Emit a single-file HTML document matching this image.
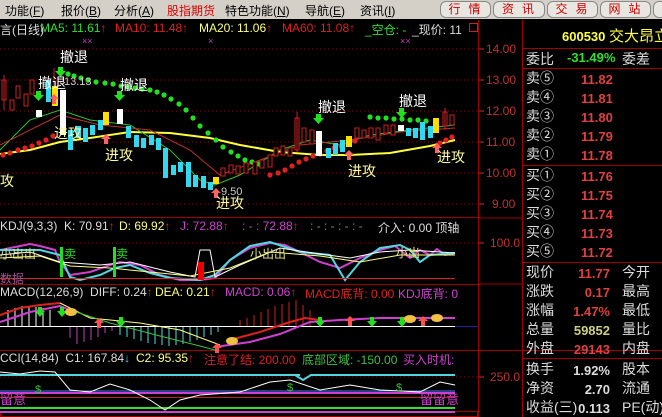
<!DOCTYPE html>
<html><head><meta charset="utf-8"><style>
*{margin:0;padding:0;box-sizing:border-box}
body{width:662px;height:417px;overflow:hidden;background:#000;font-family:"Liberation Sans","Noto Sans CJK SC",sans-serif;position:relative}
#menu{position:absolute;left:0;top:0;width:662px;height:19px;background:#d4d0c8;font-size:12px;color:#000}
#menu span{position:absolute;top:2px;white-space:nowrap}
.btn{position:absolute;top:1px;height:17px;border:1px solid #888;border-radius:6px;background:#e8e6e0;color:#c00;font-size:12px;text-align:center;line-height:15px;letter-spacing:8px;padding-left:6px}
.t{position:absolute;font-size:12px;white-space:nowrap}
</style></head><body>
<div id="menu">
<span style="left:5px">功能(<u>F</u>)</span>
<span style="left:61px">报价(<u>B</u>)</span>
<span style="left:114px">分析(<u>A</u>)</span>
<span style="left:167px;color:#d00">股指期货</span>
<span style="left:225px">特色功能(<u>N</u>)</span>
<span style="left:305px">导航(<u>E</u>)</span>
<span style="left:360px">资讯(<u>I</u>)</span>
<div class="btn" style="left:440px;width:51px">行情</div>
<div class="btn" style="left:493px;width:52px">资讯</div>
<div class="btn" style="left:547px;width:51px">交易</div>
<div class="btn" style="left:600px;width:51px">网站</div>
<div class="btn" style="left:653px;width:20px"></div>
</div>
<svg style="position:absolute;left:0;top:0" width="662" height="417">
<g stroke="#a00000" stroke-width="1" fill="none">
<line x1="0" y1="217.5" x2="478" y2="217.5"/>
<line x1="0" y1="284.5" x2="478" y2="284.5"/>
<line x1="0" y1="350.5" x2="662" y2="350.5"/>
<line x1="478.5" y1="20" x2="478.5" y2="417"/>
<line x1="522.5" y1="20" x2="522.5" y2="417"/>
<line x1="478" y1="218" x2="522" y2="218"/>
<line x1="478" y1="284" x2="522" y2="284"/>
<line x1="523" y1="48.5" x2="662" y2="48.5"/>
<line x1="523" y1="68.5" x2="662" y2="68.5"/>
<line x1="523" y1="165.5" x2="662" y2="165.5"/>
<line x1="523" y1="262.5" x2="662" y2="262.5"/>
<line x1="523" y1="358.5" x2="662" y2="358.5"/>
<rect x="0.5" y="411.5" width="477" height="5"/>
</g>
<g stroke="#801010" stroke-dasharray="1,3">
<line x1="0" y1="49" x2="478" y2="49"/><line x1="0" y1="80" x2="478" y2="80"/><line x1="0" y1="111" x2="478" y2="111"/><line x1="0" y1="142" x2="478" y2="142"/><line x1="0" y1="173" x2="478" y2="173"/><line x1="0" y1="204" x2="478" y2="204"/>
<line x1="0" y1="243" x2="478" y2="243"/><line x1="0" y1="377" x2="478" y2="377"/>
</g>
<g stroke="#c03030"><line x1="479" y1="49" x2="484" y2="49"/><line x1="479" y1="80" x2="484" y2="80"/><line x1="479" y1="111" x2="484" y2="111"/><line x1="479" y1="142" x2="484" y2="142"/><line x1="479" y1="173" x2="484" y2="173"/><line x1="479" y1="204" x2="484" y2="204"/><line x1="479" y1="243" x2="484" y2="243"/><line x1="479" y1="377" x2="484" y2="377"/></g>
<g fill="#c03030" font-size="12" font-family="Liberation Sans">
<text x="486" y="53">14.00</text><text x="486" y="84">13.00</text><text x="486" y="115">12.00</text><text x="486" y="146">11.00</text><text x="486" y="177">10.00</text><text x="492" y="208">9.00</text><text x="490" y="247">100.0</text><text x="490" y="381">250.0</text>
</g>
<polyline fill="none" stroke="#ffff40" stroke-width="2" points="0,154 30,150 60,142 90,138 130,132 170,133 210,138 240,145 280,152 320,155 350,155 390,153 430,146 455,140"/>
<polyline fill="none" stroke="#30c030" stroke-width="1" points="0,150 30,120 60,110 90,120 130,125 170,150 200,180 215,185 240,175 280,150 310,140 340,145 370,135 410,130 455,125"/>
<polyline fill="none" stroke="#c03030" stroke-width="1" points="0,145 40,125 60,115 100,125 150,130 190,150 220,175 260,160 300,145 350,140 400,132 455,128"/>
<g fill="#20e020">
<circle cx="68" cy="74" r="2.6"/>
<circle cx="74" cy="76" r="2.6"/><circle cx="81" cy="78" r="2.6"/><circle cx="88" cy="80" r="2.6"/><circle cx="96" cy="82" r="2.6"/><circle cx="105" cy="83" r="2.6"/><circle cx="113" cy="84" r="2.6"/><circle cx="121" cy="86" r="2.6"/><circle cx="128" cy="87" r="2.6"/><circle cx="135" cy="88" r="2.6"/><circle cx="142" cy="89" r="2.6"/><circle cx="150" cy="90" r="2.6"/><circle cx="157" cy="92" r="2.6"/><circle cx="164" cy="95" r="2.6"/><circle cx="171" cy="99" r="2.6"/><circle cx="179" cy="104" r="2.6"/><circle cx="186" cy="110" r="2.6"/><circle cx="193" cy="118" r="2.6"/><circle cx="200" cy="126" r="2.6"/><circle cx="208" cy="133" r="2.6"/><circle cx="216" cy="140" r="2.6"/><circle cx="223" cy="147" r="2.6"/><circle cx="231" cy="152" r="2.6"/><circle cx="238" cy="156" r="2.6"/><circle cx="245" cy="160" r="2.6"/><circle cx="252" cy="162" r="2.6"/><circle cx="259" cy="164" r="2.6"/>
<circle cx="370" cy="117" r="2.6"/><circle cx="378" cy="118" r="2.6"/><circle cx="386" cy="118" r="2.6"/><circle cx="394" cy="119" r="2.6"/><circle cx="402" cy="119" r="2.6"/><circle cx="410" cy="120" r="2.6"/><circle cx="418" cy="120" r="2.6"/><circle cx="426" cy="121" r="2.6"/>
</g>
<g fill="#e02020">
<circle cx="3" cy="155" r="2.6"/><circle cx="10" cy="153" r="2.6"/><circle cx="18" cy="150" r="2.6"/><circle cx="25" cy="148" r="2.6"/><circle cx="32" cy="146" r="2.6"/><circle cx="39" cy="143" r="2.6"/><circle cx="46" cy="140" r="2.6"/><circle cx="53" cy="136" r="2.6"/>
<circle cx="270" cy="175" r="2.6"/><circle cx="278" cy="173" r="2.6"/><circle cx="285" cy="170" r="2.6"/><circle cx="292" cy="166" r="2.6"/><circle cx="299" cy="162" r="2.6"/><circle cx="306" cy="159" r="2.6"/><circle cx="313" cy="156" r="2.6"/><circle cx="320" cy="154" r="2.6"/><circle cx="327" cy="151" r="2.6"/><circle cx="334" cy="148" r="2.6"/><circle cx="341" cy="146" r="2.6"/><circle cx="348" cy="143" r="2.6"/><circle cx="355" cy="141" r="2.6"/>
<circle cx="440" cy="143" r="2.6"/><circle cx="446" cy="140" r="2.6"/><circle cx="452" cy="137" r="2.6"/>
</g>
<g stroke-width="1">
<g fill="#000" stroke="#d02020">
<rect x="2" y="80" width="4" height="20"/><rect x="10" y="100" width="4" height="10"/><rect x="16" y="86" width="4" height="12"/><rect x="24" y="94" width="4" height="12"/><rect x="30" y="80" width="4" height="14"/>
<rect x="221" y="168" width="4" height="8"/><rect x="229" y="165" width="4" height="8"/><rect x="236" y="166" width="4" height="8"/><rect x="244" y="163" width="4" height="10"/><rect x="253" y="162" width="4" height="12"/><rect x="260" y="160" width="4" height="8"/><rect x="268" y="155" width="4" height="12"/>
<rect x="274" y="148" width="4" height="8"/><rect x="281" y="146" width="4" height="9"/><rect x="288" y="148" width="4" height="8"/><rect x="295" y="118" width="4" height="32"/><rect x="302" y="128" width="4" height="14"/><rect x="310" y="130" width="4" height="14"/>
<rect x="355" y="128" width="4" height="10"/><rect x="362" y="130" width="4" height="8"/><rect x="369" y="128" width="4" height="10"/><rect x="376" y="128" width="4" height="12"/><rect x="384" y="125" width="4" height="8"/><rect x="391" y="125" width="4" height="10"/>
<rect x="443" y="112" width="4" height="14"/><rect x="450" y="115" width="4" height="10"/>
</g>
<g stroke="#d02020"><line x1="4" y1="75" x2="4" y2="110"/><line x1="54" y1="68" x2="54" y2="100"/><line x1="297" y1="112" x2="297" y2="152"/><line x1="445" y1="108" x2="445" y2="130"/></g>
<g fill="#30d8f0">
<rect x="46" y="80" width="5" height="22"/><rect x="68" y="130" width="5" height="20"/><rect x="76" y="126" width="5" height="12"/><rect x="83" y="128" width="5" height="14"/><rect x="90" y="125" width="5" height="10"/><rect x="98" y="120" width="5" height="10"/>
<rect x="126" y="126" width="5" height="12"/><rect x="134" y="135" width="5" height="12"/><rect x="141" y="138" width="5" height="10"/><rect x="149" y="135" width="5" height="10"/><rect x="156" y="138" width="5" height="12"/>
<rect x="163" y="148" width="5" height="30"/><rect x="171" y="165" width="5" height="10"/><rect x="178" y="162" width="5" height="10"/><rect x="186" y="162" width="5" height="25"/><rect x="193" y="175" width="5" height="12"/><rect x="201" y="176" width="5" height="12"/><rect x="208" y="182" width="5" height="8"/>
<rect x="326" y="148" width="5" height="10"/><rect x="333" y="143" width="5" height="12"/><rect x="340" y="140" width="5" height="12"/>
<rect x="406" y="128" width="5" height="8"/><rect x="413" y="128" width="5" height="10"/><rect x="420" y="122" width="5" height="18"/><rect x="428" y="126" width="5" height="12"/>
</g>
<g fill="#ffffff"><rect x="36" y="110" width="6" height="7"/><rect x="60" y="90" width="6" height="45"/><rect x="117" y="109" width="6" height="15"/><rect x="316" y="131" width="6" height="25"/><rect x="398" y="125" width="6" height="6"/></g>
<g fill="#ffdd00"><rect x="52" y="86" width="6" height="20"/><rect x="103" y="112" width="6" height="13"/><rect x="213" y="177" width="6" height="7"/><rect x="346" y="136" width="6" height="11"/><rect x="433" y="118" width="6" height="15"/></g>
</g>
<g fill="#20e020"><path d="M58,67 h5 v4 h3 l-5.5,6 l-5.5,-6 h3z"/><path d="M36,91 h5 v4 h3 l-5.5,6 l-5.5,-6 h3z"/><path d="M117,91 h5 v4 h3 l-5.5,6 l-5.5,-6 h3z"/><path d="M316,114 h5 v4 h3 l-5.5,6 l-5.5,-6 h3z"/><path d="M399,108 h5 v4 h3 l-5.5,6 l-5.5,-6 h3z"/></g>
<g fill="#ff6060"><path d="M54,94 l5,5 h-3 v5 h-4 v-5 h-3z"/><path d="M106,134 l5,5 h-3 v5 h-4 v-5 h-3z"/><path d="M216,188 l5,5 h-3 v5 h-4 v-5 h-3z"/><path d="M349,150 l5,5 h-3 v5 h-4 v-5 h-3z"/><path d="M437,143 l5,5 h-3 v5 h-4 v-5 h-3z"/></g>
<g fill="#fff" font-size="14" font-family="Liberation Sans,Noto Sans CJK SC,sans-serif">
<text x="60" y="62">撤退</text><text x="38" y="88">撤退</text><text x="120" y="90">撤退</text><text x="318" y="112">撤退</text><text x="399" y="106">撤退</text>
</g>
<g fill="#ffffa0" font-size="14" font-family="Liberation Sans,Noto Sans CJK SC,sans-serif">
<text x="54" y="138">进攻</text><text x="105" y="160">进攻</text><text x="0" y="186">攻</text><text x="216" y="208">进攻</text><text x="348" y="176">进攻</text><text x="437" y="162">进攻</text>
</g>
<text x="64" y="85" fill="#ccc" font-size="11">13.13</text><text x="221" y="195" fill="#ccc" font-size="11">9.50</text>
<g fill="#c040c0" font-size="9"><text x="82" y="44">××</text><text x="208" y="44">×</text><text x="400" y="44">××</text></g>
<polyline fill="none" stroke="#d040d0" stroke-width="2" points="0,250 20,246 30,244 40,246 55,250 60,262 70,275 90,272 110,265 120,262 140,265 160,275 180,280 200,280 215,278 230,260 250,248 270,243 285,245 300,252 320,262 340,268 360,258 380,250 395,246 410,258 420,250 430,255 437,249 445,255 455,253"/>
<polyline fill="none" stroke="#50d8e0" stroke-width="2" points="0,250 20,250 40,250 60,255 70,277 80,280 100,275 115,268 130,265 150,273 170,278 200,280 215,275 230,260 250,246 270,242 300,252 330,255 345,280 360,262 380,248 400,245 410,250 420,262 430,255 455,253"/>
<polyline fill="none" stroke="#ffffff" stroke-width="1" points="0,255 30,252 60,262 100,265 130,262 170,272 195,277 200,250 210,250 215,277 240,265 280,248 320,254 350,258 380,252 410,250 455,253"/>
<polyline fill="none" stroke="#ffff80" stroke-width="1" points="0,258 40,256 70,266 110,268 150,272 190,276 230,268 270,252 320,256 360,262 400,255 455,255"/>
<line x1="0" y1="278.5" x2="455" y2="278.5" stroke="#e02020"/>
<g fill="#20e020"><rect x="60" y="247" width="3" height="30"/><rect x="113" y="247" width="3" height="30"/></g>
<rect x="198" y="262" width="6" height="18" fill="#e00"/>
<g fill="#e0e080" font-size="12" font-family="Noto Sans CJK SC,sans-serif"><text x="64" y="258" fill="#20e020">卖</text><text x="116" y="258" fill="#20e020">卖</text><text x="0" y="258">小出出</text><text x="250" y="258">小出出</text><text x="396" y="257">小出</text><text x="0" y="283" fill="#a05090">数据</text></g>
<line x1="0" y1="326.5" x2="455" y2="326.5" stroke="#fff"/>
<line x1="455" y1="326.5" x2="478" y2="326.5" stroke="#2020a0"/>
<g stroke="#ffffff"><line x1="8" y1="326" x2="8" y2="310"/><line x1="15" y1="326" x2="15" y2="308"/><line x1="22" y1="326" x2="22" y2="306"/><line x1="29" y1="326" x2="29" y2="306"/><line x1="36" y1="326" x2="36" y2="307"/><line x1="43" y1="326" x2="43" y2="308"/><line x1="50" y1="326" x2="50" y2="310"/></g>
<g stroke="#c040c0"><line x1="70" y1="327" x2="70" y2="338"/><line x1="77" y1="327" x2="77" y2="344"/><line x1="84" y1="327" x2="84" y2="342"/><line x1="91" y1="327" x2="91" y2="340"/><line x1="98" y1="327" x2="98" y2="337"/><line x1="105" y1="327" x2="105" y2="333"/><line x1="112" y1="327" x2="112" y2="331"/></g>
<g stroke="#50e0e0"><line x1="120" y1="327" x2="120" y2="335"/><line x1="127" y1="327" x2="127" y2="337"/><line x1="134" y1="327" x2="134" y2="339"/><line x1="141" y1="327" x2="141" y2="341"/><line x1="148" y1="327" x2="148" y2="343"/><line x1="155" y1="327" x2="155" y2="344"/><line x1="162" y1="327" x2="162" y2="345"/><line x1="169" y1="327" x2="169" y2="346"/><line x1="176" y1="327" x2="176" y2="345"/><line x1="183" y1="327" x2="183" y2="344"/><line x1="190" y1="327" x2="190" y2="342"/><line x1="197" y1="327" x2="197" y2="340"/><line x1="204" y1="327" x2="204" y2="337"/><line x1="211" y1="327" x2="211" y2="335"/><line x1="218" y1="327" x2="218" y2="332"/></g>
<g stroke="#d02020"><line x1="240" y1="326" x2="240" y2="320"/><line x1="247" y1="326" x2="247" y2="318"/><line x1="254" y1="326" x2="254" y2="315"/><line x1="261" y1="326" x2="261" y2="312"/><line x1="268" y1="326" x2="268" y2="309"/><line x1="275" y1="326" x2="275" y2="306"/><line x1="282" y1="326" x2="282" y2="304"/><line x1="289" y1="326" x2="289" y2="302"/><line x1="296" y1="326" x2="296" y2="300"/><line x1="303" y1="326" x2="303" y2="305"/><line x1="310" y1="326" x2="310" y2="310"/></g>
<polyline fill="none" stroke="#d040d0" stroke-width="2" points="0,322 30,312 60,306 70,310"/>
<polyline fill="none" stroke="#e02020" stroke-width="2" points="0,315 20,308 40,305 60,303"/>
<polyline fill="none" stroke="#ffff80" stroke-width="1" points="60,303 90,318 140,323 180,330 220,345"/>
<polyline fill="none" stroke="#40c040" stroke-width="1" points="70,310 110,323 160,336 200,346 215,350"/>
<polyline fill="none" stroke="#d040d0" stroke-width="2" points="215,347 250,342 280,334 310,322 340,320 380,318 420,318 455,318"/>
<polyline fill="none" stroke="#e02020" stroke-width="2" points="230,340 260,332 290,322 305,318 320,320"/>
<g fill="#20e020"><path d="M38,307 h4 v4 h3 l-5,6 l-5,-6 h3z"/><path d="M60,307 h4 v4 h3 l-5,6 l-5,-6 h3z"/><path d="M119,317 h4 v4 h3 l-5,6 l-5,-6 h3z"/><path d="M318,317 h4 v4 h3 l-5,6 l-5,-6 h3z"/><path d="M370,317 h4 v4 h3 l-5,6 l-5,-6 h3z"/><path d="M400,317 h4 v4 h3 l-5,6 l-5,-6 h3z"/></g>
<g fill="#ff5050"><path d="M99,318 l5,5 h-3 v5 h-4 v-5 h-3z"/><path d="M217,343 l5,5 h-3 v5 h-4 v-5 h-3z"/><path d="M350,316 l5,5 h-3 v5 h-4 v-5 h-3z"/><path d="M423,316 l5,5 h-3 v5 h-4 v-5 h-3z"/></g>
<g fill="#f0c040"><ellipse cx="71" cy="312" rx="6" ry="4"/><ellipse cx="232" cy="341" rx="6" ry="4"/><ellipse cx="410" cy="319" rx="6" ry="4"/><ellipse cx="437" cy="318" rx="6" ry="4"/></g>
<line x1="0" y1="375" x2="300" y2="375" stroke="#50d8e0" stroke-width="2"/><polyline fill="none" stroke="#50d8e0" stroke-width="2" points="295,375 303,380 311,375 455,375"/>
<line x1="0" y1="391" x2="455" y2="391" stroke="#4080ff"/>
<line x1="0" y1="393" x2="455" y2="393" stroke="#d040d0" stroke-width="2"/>
<line x1="0" y1="397.5" x2="455" y2="397.5" stroke="#c02020"/>
<line x1="0" y1="408" x2="455" y2="408" stroke="#30e030" stroke-width="2"/>
<line x1="0" y1="412" x2="455" y2="412" stroke="#d040d0" stroke-width="2"/>
<polyline fill="none" stroke="#ffffff" stroke-width="1" points="0,372 20,374 40,371 55,372 70,390 90,392 110,384 130,390 150,400 165,410 180,400 200,395 240,392 270,382 290,380 320,390 350,385 380,390 420,392 440,382 455,385"/>
<g fill="#d040d0" font-size="13" font-family="Noto Sans CJK SC,sans-serif"><text x="0" y="404">留意</text><text x="420" y="404">留留意</text></g>
<g fill="#40c040" font-size="11"><text x="35" y="393">$</text><text x="287" y="391">$</text><text x="396" y="391">$</text></g>
</svg>
<div class="t" style="left:0;top:21px;color:#ddd">言(日线)</div>
<div class="t" style="left:40px;top:21px;color:#30e030">MA5: 11.61<span style="color:#e02020">↑</span></div>
<div class="t" style="left:115px;top:21px;color:#e02020">MA10: 11.48↑</div>
<div class="t" style="left:199px;top:21px;color:#ffff80">MA20: 11.06<span style="color:#e02020">↑</span></div>
<div class="t" style="left:282px;top:21px;color:#e02020">MA60: 11.08↑</div>
<div class="t" style="left:365px;top:21px;color:#30e030">_空仓: -</div>
<div class="t" style="left:412px;top:21px;color:#ddd">_现价: 11</div>
<div style="position:absolute;left:469px;top:23px;width:9px;height:9px;border:1px solid #d02020"></div>
<div class="t" style="left:0;top:219px;color:#ddd">KDJ(9,3,3) &nbsp;K: 70.91<span style="color:#e02020">↑</span></div>
<div class="t" style="left:119px;top:219px;color:#ffff80">D: 69.92<span style="color:#e02020">↑</span></div>
<div class="t" style="left:180px;top:219px;color:#d040d0">J: 72.88<span style="color:#e02020">↑</span></div>
<div class="t" style="left:242px;top:219px;color:#d040d0">: - : 72.88<span style="color:#e02020">↑</span></div>
<div class="t" style="left:310px;top:219px;color:#888">: - : - : - : -</div>
<div class="t" style="left:378px;top:219px;color:#ddd">介入: 0.00 顶轴</div>
<div class="t" style="left:0;top:285px;color:#ddd">MACD(12,26,9) &nbsp;DIFF: 0.24<span style="color:#e02020">↑</span></div>
<div class="t" style="left:155px;top:285px;color:#ffff80">DEA: 0.21<span style="color:#e02020">↑</span></div>
<div class="t" style="left:225px;top:285px;color:#d040d0">MACD: 0.06<span style="color:#e02020">↑</span></div>
<div class="t" style="left:305px;top:285px;color:#e02020">MACD底背: 0.00</div>
<div class="t" style="left:398px;top:285px;color:#d040d0">KDJ底背: 0</div>
<div class="t" style="left:0;top:351px;color:#ddd">CCI(14,84) &nbsp;C1: 167.84<span style="color:#50d8e0">↓</span></div>
<div class="t" style="left:136px;top:351px;color:#ffff80">C2: 95.35<span style="color:#e02020">↑</span></div>
<div class="t" style="left:204px;top:351px;color:#e02020">注意了结: 200.00</div>
<div class="t" style="left:302px;top:351px;color:#40c040">底部区域: -150.00</div>
<div class="t" style="left:403px;top:351px;color:#d040d0">买入时机:</div>
<div style="position:absolute;left:523px;top:20px;width:139px;height:397px;overflow:hidden;font-size:14px;color:#ddd;font-family:'Liberation Sans','Noto Sans CJK SC',sans-serif">
<div style="position:absolute;left:39px;top:5px;color:#ffff40;font-weight:bold;font-size:13px;white-space:nowrap">600530 <span style="font-weight:normal;font-size:15px">交大昂立</span></div>
<div style="position:absolute;left:3px;top:29px">委比</div><div style="position:absolute;left:44px;top:30px;color:#30e030;font-weight:bold;font-size:13px">-31.49%</div><div style="position:absolute;left:99px;top:29px">委差</div>
<div style="position:absolute;left:3px;top:49px;line-height:19px">卖⑤<br>卖④<br>卖③<br>卖②<br>卖①</div>
<div style="position:absolute;left:58px;top:50px;line-height:19px;color:#e04040;font-weight:bold;font-size:13px">11.82<br>11.81<br>11.80<br>11.79<br>11.78</div>
<div style="position:absolute;left:3px;top:146px;line-height:19px">买①<br>买②<br>买③<br>买④<br>买⑤</div>
<div style="position:absolute;left:58px;top:147px;line-height:19px;color:#e04040;font-weight:bold;font-size:13px">11.76<br>11.75<br>11.74<br>11.73<br>11.72</div>
<div style="position:absolute;left:3px;top:243px;line-height:19px">现价<br>涨跌<br>涨幅<br>总量<br>外盘</div>
<div style="position:absolute;right:52px;top:244px;line-height:19px;font-weight:bold;font-size:13px;text-align:right"><span style="color:#e04040">11.77</span><br><span style="color:#e04040">0.17</span><br><span style="color:#e04040">1.47%</span><br><span style="color:#d0d080">59852</span><br><span style="color:#e04040">29143</span></div>
<div style="position:absolute;left:99px;top:243px;line-height:19px;white-space:nowrap">今开<br>最高<br>最低<br>量比<br>内盘</div>
<div style="position:absolute;left:3px;top:340px;line-height:19px;white-space:nowrap">换手<br>净资<br>收益(三)</div>
<div style="position:absolute;right:52px;top:341px;line-height:19px;font-weight:bold;font-size:13px;text-align:right;color:#ddd">1.92%<br>2.70<br>0.113</div>
<div style="position:absolute;left:99px;top:340px;line-height:19px;white-space:nowrap">股本<br>流通<br>PE(动)</div>
</div>
</body></html>
